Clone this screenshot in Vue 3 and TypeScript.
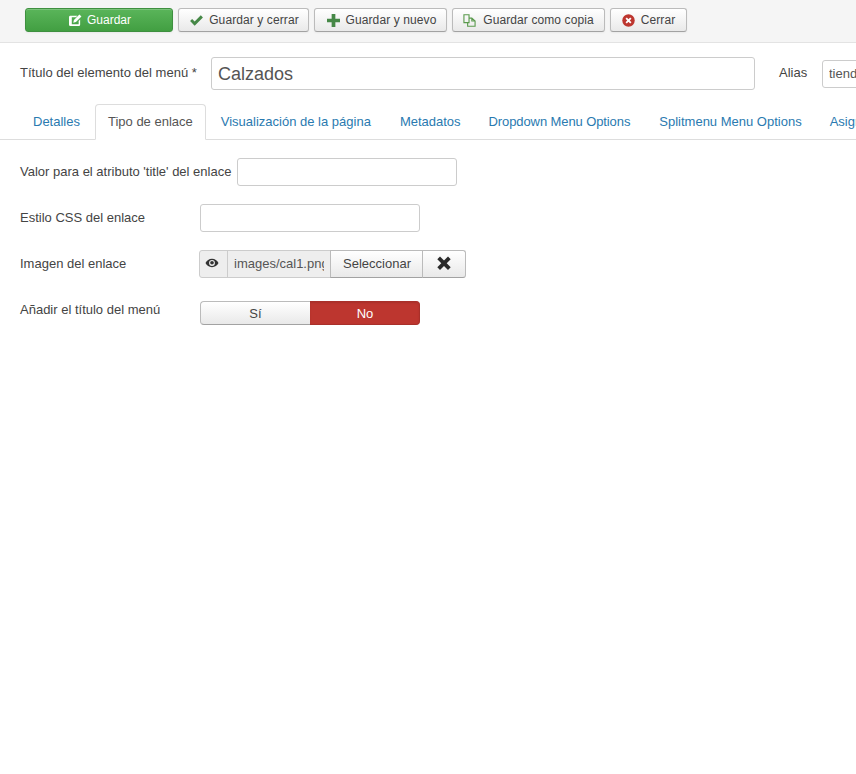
<script setup lang="ts">
const tabs = ['Detalles', 'Tipo de enlace', 'Visualización de la página', 'Metadatos', 'Dropdown Menu Options', 'Splitmenu Menu Options', 'Asignación de módulos']
</script>

<template>
  <div class="page">
    <div class="toolbar">
      <button class="btn save">
        <svg class="ic" viewBox="0 0 14 14" width="13" height="13"><path fill="#fff" d="M1.500 2H9L7.400 3.600H3v7.400h7.400V7.500L12 6v5.500A1.500 1.500 0 0 1 10.500 13h-9A1.500 1.500 0 0 1 0 11.500v-8A1.500 1.500 0 0 1 1.500 2z"/><path fill="#fff" d="M11.200.6 13.400 2.800 7.500 8.700 4.600 9.400 5.300 6.500z"/></svg>
        <span class="save-label">Guardar</span>
      </button>
      <button class="btn w131">
        <svg class="ic" viewBox="0 0 14 12" width="13" height="11"><path fill="#468847" d="M0 6.500 2.200 4.300 5 7.100 11.700.4 14 2.700 5 11.700z"/></svg>
        <span class="wide">Guardar y cerrar</span>
      </button>
      <button class="btn w133">
        <svg class="ic" viewBox="0 0 14 14" width="13" height="13"><path fill="#468847" d="M5 0h4v5h5v4H9v5H5V9H0V5h5z"/></svg>
        <span class="wide">Guardar y nuevo</span>
      </button>
      <button class="btn w153">
        <svg class="ic" viewBox="0 0 14 14" width="13" height="13"><path fill="none" stroke="#5a9a4c" stroke-width="1.200" d="M1 .8h5.500v8.500H1zM6.500 4.500h3L13 7.500v5.700H5v-3.900M9.500 4.500v3H13"/></svg>
        <span class="wide">Guardar como copia</span>
      </button>
      <button class="btn w77">
        <svg class="ic" viewBox="0 0 14 14" width="13" height="13"><circle cx="7" cy="7" r="6.700" fill="#bd362f"/><path stroke="#fff" stroke-width="2" d="M4.500 4.500l5 5M9.500 4.500l-5 5"/></svg>
        <span class="wide">Cerrar</span>
      </button>
    </div>

    <div class="content">
      <div class="title-row">
        <label class="title-label">Título del elemento del menú *</label>
        <input class="title-input" value="Calzados" />
        <label class="alias-label">Alias</label>
        <input class="alias-input" value="tienda-calzados" />
      </div>

      <ul class="tabs">
        <li v-for="(t, i) in tabs" :key="t" class="tab" :class="{ active: i === 1 }">{{ t }}</li>
      </ul>

      <div class="row row-first">
        <label class="lbl-auto">Valor para el atributo 'title' del enlace</label>
        <input class="field" />
      </div>
      <div class="row">
        <label class="lbl">Estilo CSS del enlace</label>
        <input class="field" />
      </div>
      <div class="row">
        <label class="lbl">Imagen del enlace</label>
        <div class="media">
          <span class="addon">
            <svg viewBox="0 0 16 12" width="14" height="10"><path fill="#333" d="M8 1C4.500 1 1.700 3.200.2 6c1.500 2.800 4.300 5 7.800 5s6.300-2.200 7.800-5C14.300 3.200 11.500 1 8 1zm0 8.500A3.500 3.500 0 1 1 8 2.500a3.500 3.500 0 0 1 0 7z"/><circle cx="8" cy="5.700" r="2.200" fill="#333"/></svg>
          </span>
          <input class="path" value="images/cal1.png" readonly />
          <button class="seg select">Seleccionar</button>
          <button class="seg clear">
            <svg viewBox="0 0 14 14" width="14" height="14"><path fill="#2a2a2a" d="M3 .5 7 4.500 11 .5 13.700 3.200 9.700 7.200 13.700 11.200 11 13.900 7 9.900 3 13.900.3 11.200 4.300 7.200.3 3.200z"/></svg>
          </button>
        </div>
      </div>
      <div class="row row-toggle">
        <label class="lbl">Añadir el título del menú</label>
        <div class="toggle">
          <span class="opt si">Sí</span>
          <span class="opt no">No</span>
        </div>
      </div>
    </div>
  </div>
</template>

<style>
html, body { margin: 0; background: #fff; overflow: hidden; }
</style>

<style scoped>
.page {
  width: 856px;
  height: 774px;
  overflow: hidden;
  font-family: "Liberation Sans", Arial, sans-serif;
  font-size: 12px;
  color: #444;
  background: #fff;
}
.toolbar {
  box-sizing: border-box;
  height: 43px;
  padding: 8px 0 0 25px;
  display: flex;
  gap: 5px;
  align-items: flex-start;
  background: #f5f5f5;
  border-bottom: 1px solid #e3e3e3;
}
.btn {
  box-sizing: border-box;
  height: 24px;
  padding: 0 0 0 2px;
  display: flex;
  align-items: center;
  justify-content: center;
  font: 12px "Liberation Sans", Arial, sans-serif;
  color: #444;
  background: linear-gradient(#fff, #e9e9e9);
  border: 1px solid #bbb;
  border-bottom-color: #a2a2a2;
  border-radius: 3px;
  box-shadow: inset 0 1px 0 rgba(255, 255, 255, .2), 0 1px 2px rgba(0, 0, 0, .05);
}
.wide { letter-spacing: .1px; }
.ic { margin-right: 6px; flex: none; }
.save {
  width: 148px;
  padding: 0;
  color: #fff;
  background: linear-gradient(#5ab55a, #429f42);
  border-color: #3f9040;
}
.save .ic { margin-left: 2px; margin-right: 5px; }
.w131 { width: 131px; }
.w133 { width: 133px; }
.w153 { width: 153px; }
.w153 .ic { margin-right: 7px; margin-left: -2px; }
.w77 { width: 77px; padding: 0; }

.content { padding: 14px 0 0 20px; }
.title-row {
  display: flex;
  align-items: center;
  height: 33px;
  white-space: nowrap;
}
.title-label { width: 191px; flex: none; font-size: 13px; position: relative; top: -1px; letter-spacing: .02px; }
.title-input {
  box-sizing: border-box;
  flex: none;
  width: 544px;
  height: 33px;
  padding: 1px 6px 0;
  font: 18px "Liberation Sans", Arial, sans-serif;
  color: #555;
  border: 1px solid #ccc;
  border-radius: 3px;
  outline: none;
}
.alias-label { margin-left: 24px; width: 43px; flex: none; font-size: 13px; position: relative; top: -1px; }
.alias-input {
  box-sizing: border-box;
  flex: none;
  width: 160px;
  height: 28px;
  padding: 0 6px;
  font: 13px "Liberation Sans", Arial, sans-serif;
  color: #555;
  border: 1px solid #ccc;
  border-radius: 3px;
  outline: none;
}

.tabs {
  list-style: none;
  margin: 14px 0 0 -20px;
  padding: 0 0 0 20px;
  height: 35px;
  display: flex;
  white-space: nowrap;
  border-bottom: 1px solid #ddd;
}
.tab {
  flex: none;
  box-sizing: border-box;
  height: 36px;
  padding: 0 12px;
  margin-right: 2px;
  line-height: 34px;
  font-size: 13px;
  color: #2a7ab0;
  border: 1px solid transparent;
}
.tab:nth-child(3) { padding-right: 13px; }
.tab:nth-child(5) { letter-spacing: -.1px; padding-right: 13px; }
.tab.active {
  color: #555;
  background: #fff;
  border-color: #ddd #ddd transparent;
  border-radius: 4px 4px 0 0;
}

.row { display: flex; align-items: center; height: 28px; margin-bottom: 18px; white-space: nowrap; }
.row-first { margin-top: 18px; }
.row-toggle { margin-top: 23px; height: 24px; }
.row label { font-size: 13px; position: relative; top: -1px; }
.row-toggle label { top: -4px; }
.lbl { width: 180px; flex: none; }
.lbl-auto { width: 217px; flex: none; }
.field {
  box-sizing: border-box;
  width: 220px;
  height: 28px;
  border: 1px solid #ccc;
  border-radius: 3px;
  background: #fff;
  outline: none;
}
.media { display: flex; margin-left: -1px; height: 28px; }
.addon {
  box-sizing: border-box;
  width: 29px;
  display: flex;
  align-items: center;
  justify-content: center;
  background: #eee;
  border: 1px solid #ccc;
  border-radius: 3px 0 0 3px;
  padding: 0 3px 2px 0;
}
.path {
  box-sizing: border-box;
  width: 103px;
  height: 28px;
  margin-left: -1px;
  padding: 0 6px 1px;
  font: 13px "Liberation Sans", Arial, sans-serif;
  color: #555;
  background: #eee;
  border: 1px solid #ccc;
  border-right: 0;
  outline: none;
}
.seg {
  box-sizing: border-box;
  height: 28px;
  padding: 0;
  font: 13px "Liberation Sans", Arial, sans-serif;
  color: #444;
  background: linear-gradient(#fff, #e9e9e9);
  border: 1px solid #bbb;
  border-bottom-color: #a2a2a2;
  display: flex;
  align-items: center;
  justify-content: center;
}
.select { width: 93px; padding: 0 0 1px 1px; }
.clear { width: 44px; margin-left: -1px; border-radius: 0 3px 3px 0; padding: 0 1px 3px 0; }
.toggle { display: flex; width: 220px; height: 24px; }
.opt {
  box-sizing: border-box;
  width: 110px;
  display: flex;
  align-items: center;
  justify-content: center;
  font-size: 13px;
}
.si {
  color: #444;
  background: linear-gradient(#fff, #e9e9e9);
  border: 1px solid #bbb;
  border-bottom-color: #a2a2a2;
  border-right: 0;
  border-radius: 4px 0 0 4px;
}
.no {
  color: #fff;
  background: #bd362f;
  border: 1px solid #a9302a;
  border-left: 0;
  border-radius: 0 4px 4px 0;
  box-shadow: inset 0 1px 2px rgba(0, 0, 0, .1);
  padding-left: 1px;
}
</style>
